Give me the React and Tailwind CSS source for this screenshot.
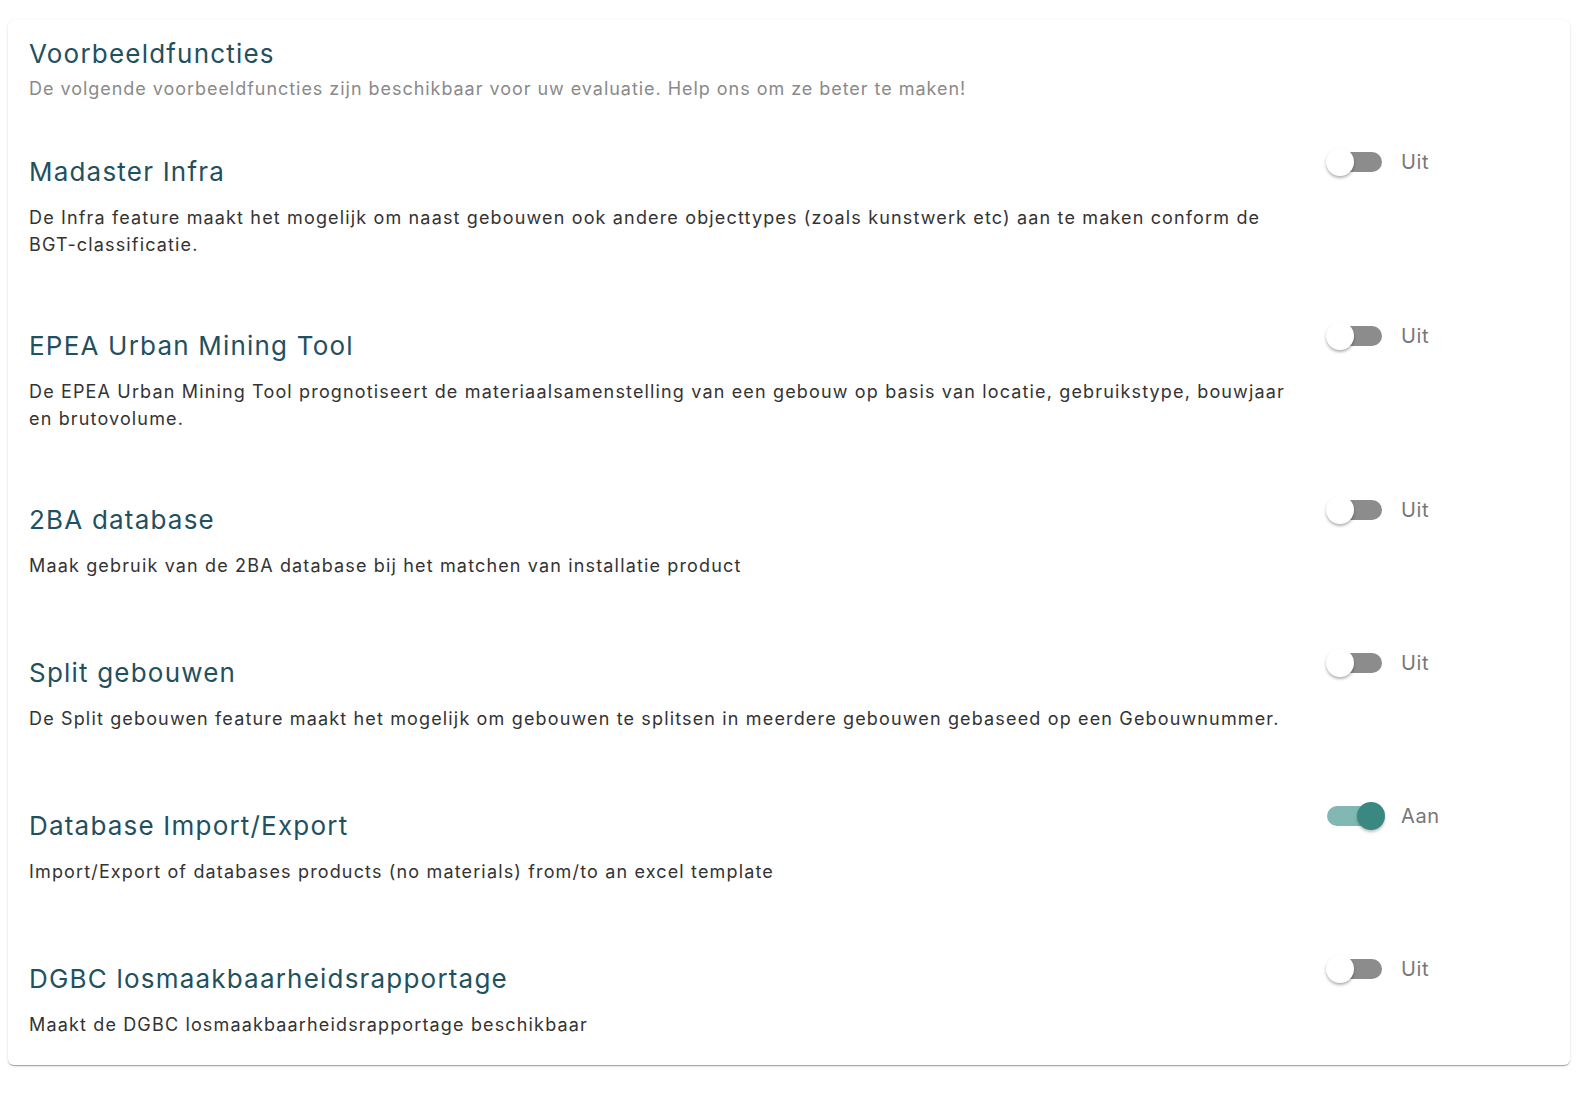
const features = [
  {
    title: 'Madaster Infra',
    text: 'De Infra feature maakt het mogelijk om naast gebouwen ook andere objecttypes (zoals kunstwerk etc) aan te maken conform de BGT-classificatie.',
    on: false,
  },
  {
    title: 'EPEA Urban Mining Tool',
    text: 'De EPEA Urban Mining Tool prognotiseert de materiaalsamenstelling van een gebouw op basis van locatie, gebruikstype, bouwjaar en brutovolume.',
    on: false,
  },
  {
    title: '2BA database',
    text: 'Maak gebruik van de 2BA database bij het matchen van installatie product',
    on: false,
  },
  {
    title: 'Split gebouwen',
    text: 'De Split gebouwen feature maakt het mogelijk om gebouwen te splitsen in meerdere gebouwen gebaseed op een Gebouwnummer.',
    on: false,
  },
  {
    title: 'Database Import/Export',
    text: 'Import/Export of databases products (no materials) from/to an excel template',
    on: true,
  },
  {
    title: 'DGBC losmaakbaarheidsrapportage',
    text: 'Maakt de DGBC losmaakbaarheidsrapportage beschikbaar',
    on: false,
  },
];

const Toggle = ({ on }) => (
  <div className="relative w-[59px] h-[28px] shrink-0">
    <div
      className={
        on
          ? 'absolute left-[1px] top-[4px] w-[55px] h-[20px] rounded-full bg-[#82b8b4]'
          : 'absolute left-[1px] top-[4px] w-[55px] h-[20px] rounded-full bg-[#8c8c8c]'
      }
    />
    <div
      className={
        on
          ? 'absolute right-0 top-0 w-[28px] h-[28px] rounded-full bg-[#3b8782] shadow-[0_2px_3px_rgba(0,0,0,0.25)]'
          : 'absolute left-0 top-0 w-[28px] h-[28px] rounded-full bg-white shadow-[0_2px_3px_rgba(0,0,0,0.3)]'
      }
    />
  </div>
);

const FeatureRow = ({ feature }) => (
  <div className="flex items-start min-h-[153px] pb-[70px] last:min-h-0 last:pb-[27px]">
    <div className="w-[1258px] shrink-0">
      <h3 className="text-[26px] leading-[36px] tracking-[1.2px] text-[#1f5160]">{feature.title}</h3>
      <p className="mt-[14px] text-[18px] leading-[27px] tracking-[1.15px] text-[#333333]">{feature.text}</p>
    </div>
    <div className="ml-[39px] -mt-[6px] flex items-center">
      <Toggle on={feature.on} />
      <span className="ml-[16px] text-[20px] leading-[28px] tracking-[0.6px] text-[#777777]">
        {feature.on ? 'Aan' : 'Uit'}
      </span>
    </div>
  </div>
);

export default function App() {
  return (
    <div className="min-h-screen bg-white pt-[20px] pl-[8px]" style={{ fontFamily: 'Inter, "Noto Sans", sans-serif' }}>
      <div className="w-[1562px] rounded-[6px] bg-white px-[21px] pt-[16px] shadow-[0_2px_1px_-1px_rgba(0,0,0,0.2),0_1px_1px_0_rgba(0,0,0,0.14),0_1px_3px_0_rgba(0,0,0,0.12)]">
        <h2 className="text-[26px] leading-[36px] tracking-[1.2px] text-[#1f5160]">Voorbeeldfuncties</h2>
        <p className="mt-[3px] text-[18px] leading-[27px] tracking-[0.96px] text-[#8a8a8a]">
          De volgende voorbeeldfuncties zijn beschikbaar voor uw evaluatie. Help ons om ze beter te maken!
        </p>
        <div className="mt-[52px] flex flex-col">
          {features.map((f) => (
            <FeatureRow key={f.title} feature={f} />
          ))}
        </div>
      </div>
    </div>
  );
}
